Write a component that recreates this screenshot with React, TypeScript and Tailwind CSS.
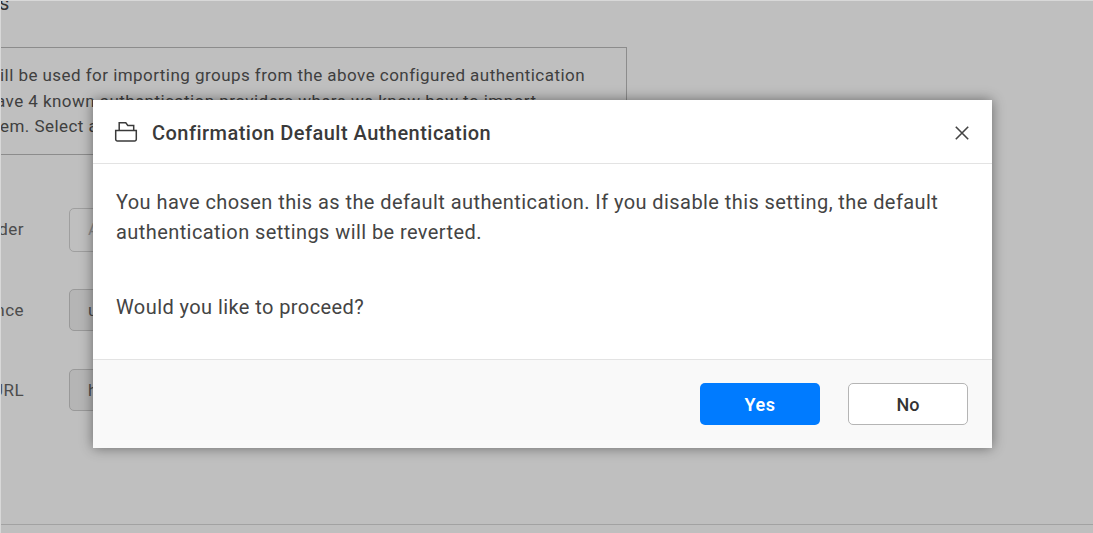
const rows = [
  { label: 'Provider', value: 'Azure', mt: 'mt-[53px]', box: 'h-[44px] bg-white border-[#d4d4d4] text-[#bbb]', labelPad: '' },
  { label: 'Audience', value: 'urn', mt: 'mt-[37px]', box: 'h-[42px] bg-[#f2f2f2] border-[#ccc] text-[#666]', labelPad: 'pt-[1px]' },
  { label: 'Login URL', value: 'https', mt: 'mt-[38px]', box: 'h-[42px] bg-[#f2f2f2] border-[#ccc] text-[#666]', labelPad: 'pt-[1px]' },
];

const FolderIcon = () => (
  <svg className="shrink-0" width="24" height="24" viewBox="0 0 24 24" fill="none" stroke="#3a3a3a" strokeWidth="1.5">
    <path d="M5.2 9.5V1.8h6.6l2 2.6h5.9v5.1" />
    <path d="M1.7 9.6h20.6v8.7a1.7 1.7 0 0 1-1.7 1.7H3.4a1.7 1.7 0 0 1-1.7-1.7z" />
  </svg>
);

const CloseIcon = () => (
  <svg width="14" height="14" viewBox="0 0 14 14" fill="none" stroke="#444" strokeWidth="1.6">
    <path d="M0.8 0.8 13.2 13.2M13.2 0.8 0.8 13.2" />
  </svg>
);

export default function App() {
  return (
    <div className="relative h-[533px] w-[1093px] overflow-hidden bg-white font-['Roboto',sans-serif] text-[#333]">
      <div className="ml-[-1px] h-[47px] text-[20px] leading-[6px] tracking-[0.4px] text-[#444]">s</div>
      <div className="ml-[-2px] h-[108px] w-[629px] border border-[#bbb] pl-[2px] pt-[15px] text-[17px] leading-[25.5px] tracking-[0.45px] text-[#555]">
        <p className="ml-[-1px] whitespace-nowrap">ill be used for importing groups from the above configured authentication</p>
        <p className="ml-[-5px] whitespace-nowrap">ave 4 known authentication providers where we know how to import</p>
        <p className="ml-[-1px] whitespace-nowrap">em. Select a provider</p>
      </div>
      {rows.map((row) => (
        <div key={row.label} className={`flex items-center ${row.mt}`}>
          <div className={`flex w-[24px] justify-end whitespace-nowrap text-[17px] tracking-[0.45px] text-[#666] ${row.labelPad}`}>{row.label}</div>
          <div className={`${row.box} ml-[45px] w-[300px] rounded-[5px] border pl-[18px] text-[17px] leading-[40px]`}>
            {row.value}
          </div>
        </div>
      ))}
      <div className="absolute inset-x-0 top-[524px] border-t border-[#d8d8d8]" />

      <div className="absolute inset-0 bg-black/25" />
      <div className="absolute inset-0 border-l border-t border-[#d8d8d8]" />

      <div className="absolute left-[93px] top-[100px] flex h-[348px] w-[899px] flex-col bg-white shadow-[0_0_12px_rgba(0,0,0,0.45)]">
        <div className="flex h-[64px] items-center border-b border-[#e3e3e3] pl-[21px] pr-[23px] pt-[2px]">
          <FolderIcon />
          <h2 className="ml-[14px] flex-1 text-[20px] font-medium tracking-[0.47px] text-[#3a3a3a]">
            Confirmation Default Authentication
          </h2>
          <CloseIcon />
        </div>
        <div className="flex-1 px-[23px] pt-[23px] text-[20px] leading-[30px] tracking-[0.42px] text-[#444]">
          <p>
            You have chosen this as the default authentication. If you disable this setting, the default
            authentication settings will be reverted.
          </p>
          <p className="mt-[45px]">Would you like to proceed?</p>
        </div>
        <div className="flex h-[89px] items-center justify-end gap-[28px] border-t border-[#e3e3e3] bg-[#f9f9f9] pr-[24px]">
          <button className="h-[42px] w-[120px] rounded-[5px] bg-[#007bff] text-[18px] font-semibold tracking-[0.5px] text-white">Yes</button>
          <button className="h-[42px] w-[120px] rounded-[5px] border border-[#b5b5b5] bg-white text-[18px] font-medium text-[#333]">No</button>
        </div>
      </div>
    </div>
  );
}
